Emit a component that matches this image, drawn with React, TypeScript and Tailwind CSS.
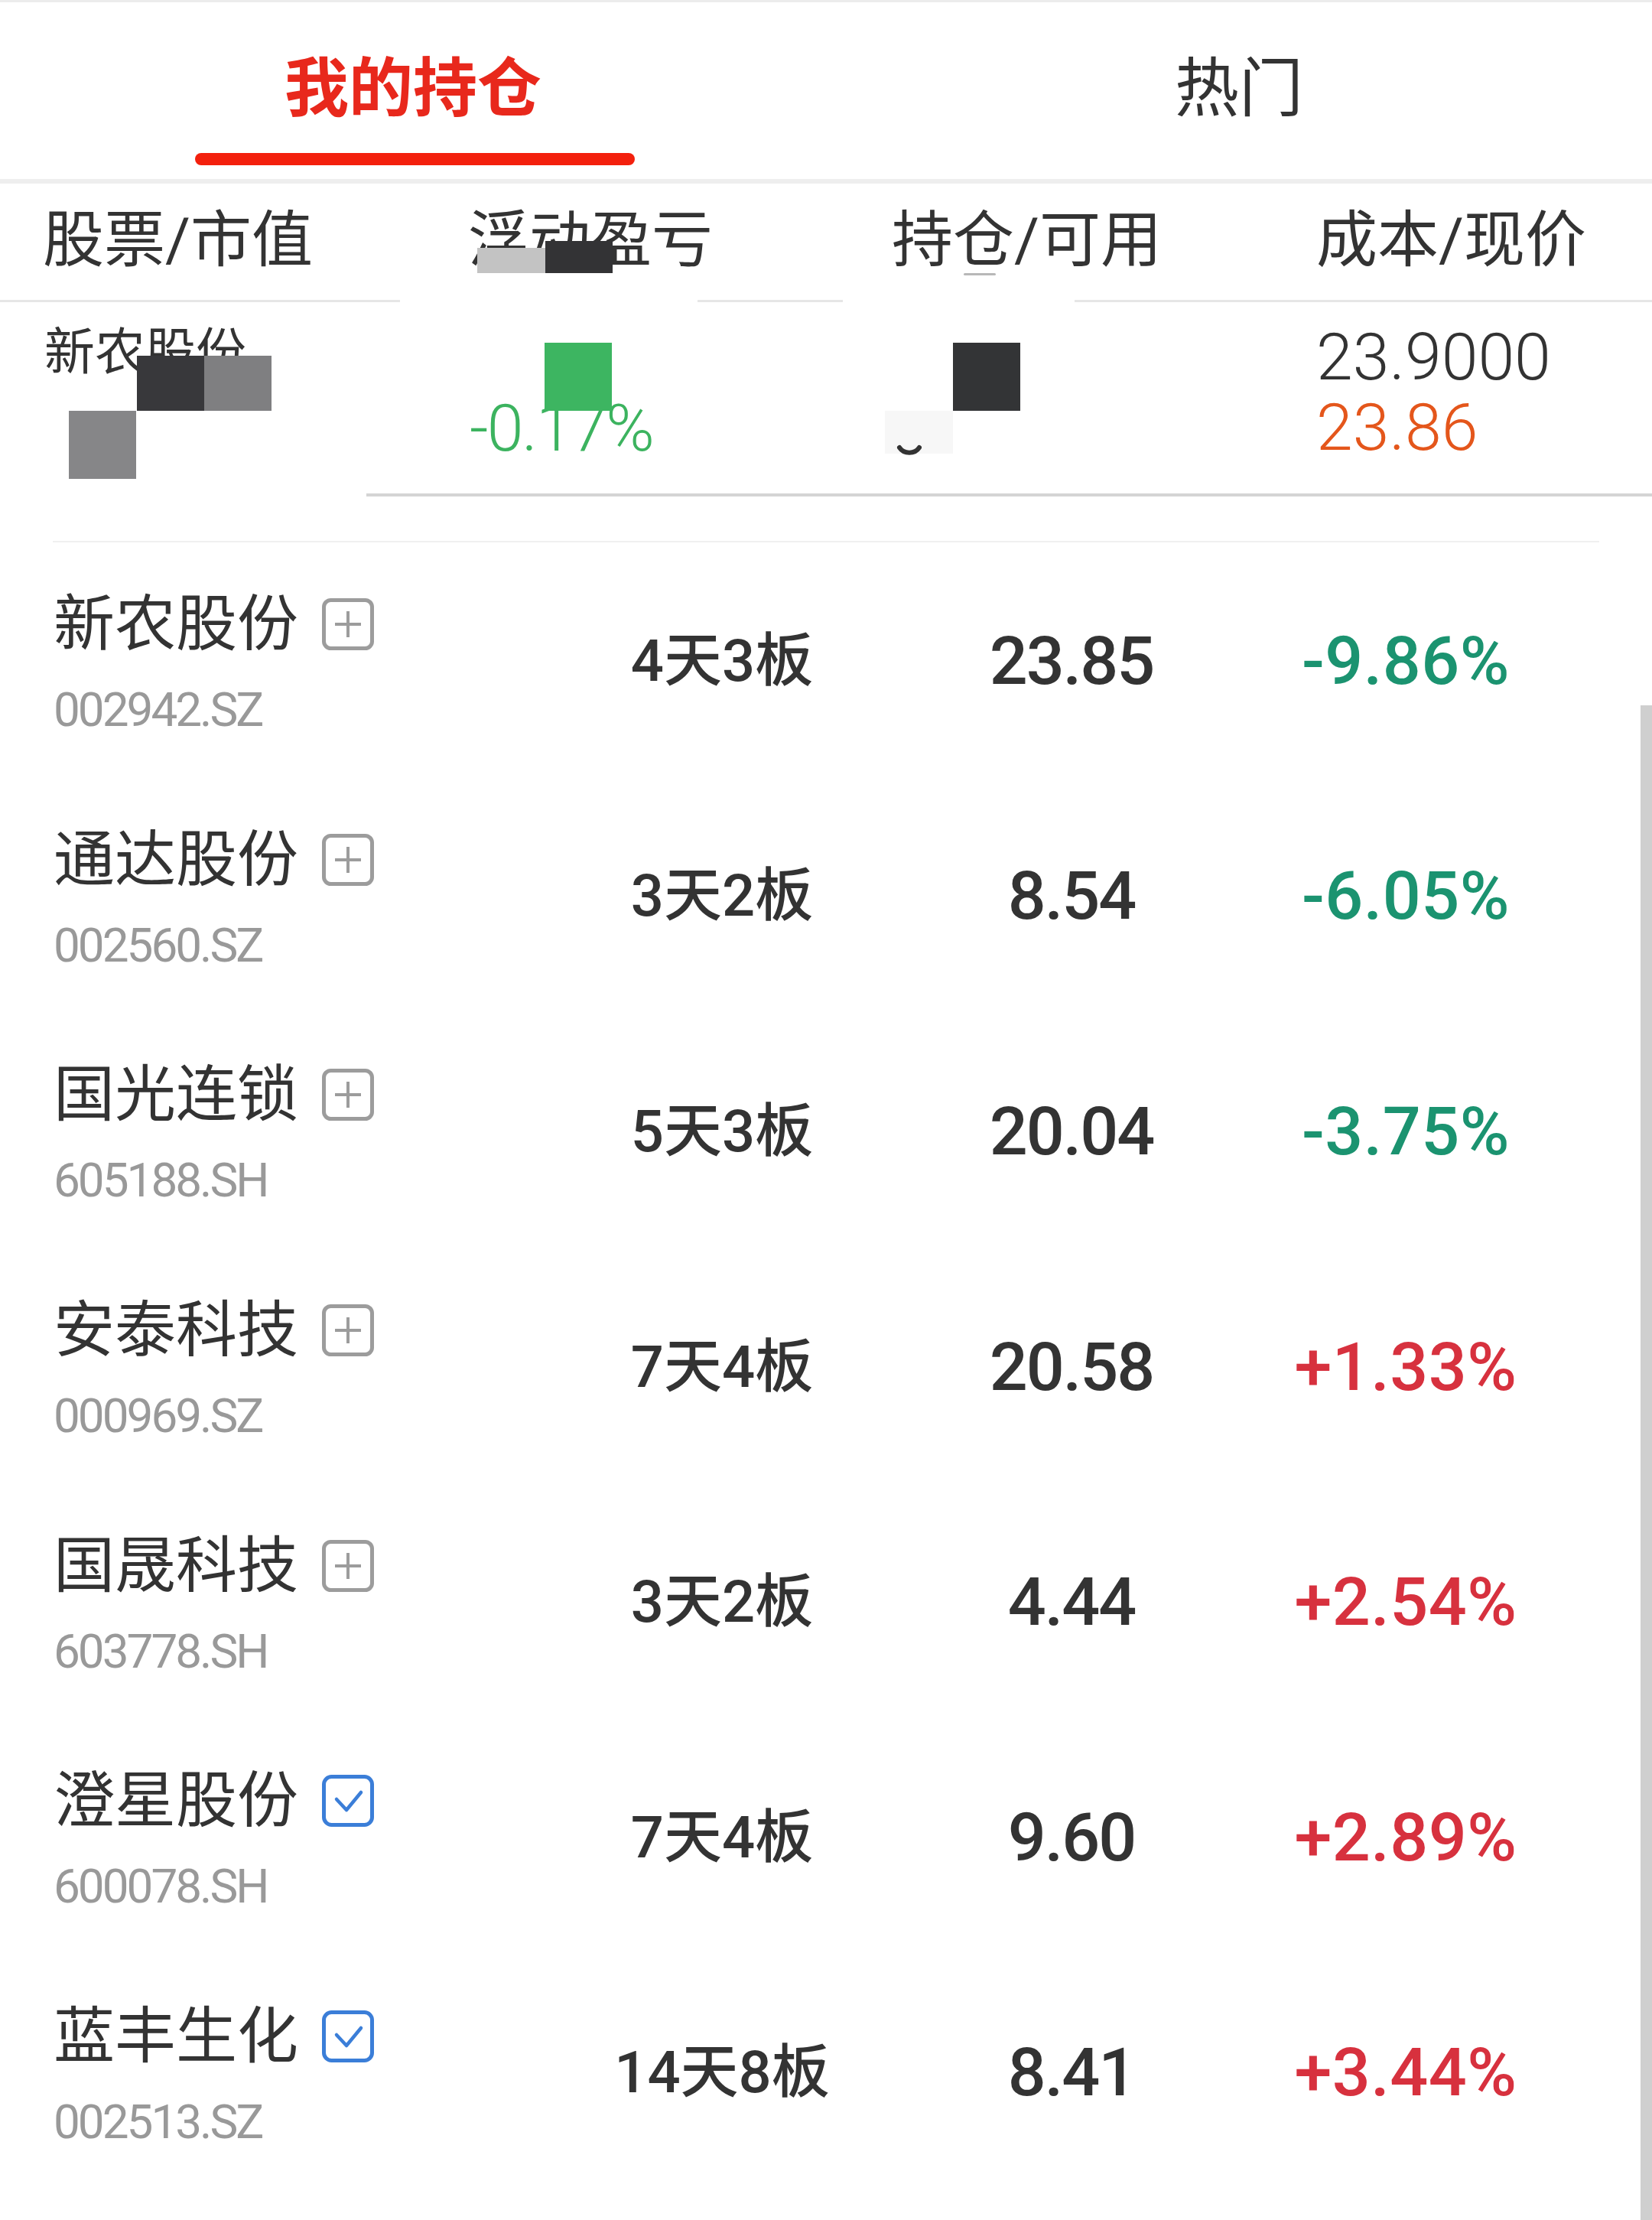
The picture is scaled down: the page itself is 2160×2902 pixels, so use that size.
import React from 'react';

type Row = {
    name: string;
    code: string;
    streak: string;
    price: string;
    change: string;
    added: boolean;
};

const rows: Row[] = [
    { name: '新农股份', code: '002942.SZ', streak: '4天3板', price: '23.85', change: '-9.86%', added: false },
    { name: '通达股份', code: '002560.SZ', streak: '3天2板', price: '8.54', change: '-6.05%', added: false },
    { name: '国光连锁', code: '605188.SH', streak: '5天3板', price: '20.04', change: '-3.75%', added: false },
    { name: '安泰科技', code: '000969.SZ', streak: '7天4板', price: '20.58', change: '+1.33%', added: false },
    { name: '国晟科技', code: '603778.SH', streak: '3天2板', price: '4.44', change: '+2.54%', added: false },
    { name: '澄星股份', code: '600078.SH', streak: '7天4板', price: '9.60', change: '+2.89%', added: true },
    { name: '蓝丰生化', code: '002513.SZ', streak: '14天8板', price: '8.41', change: '+3.44%', added: true },
];

function AddIcon() {
    return (
        <svg width="68" height="68" viewBox="0 0 68 68" fill="none">
            <rect x="2.5" y="2.5" width="63" height="63" rx="9" stroke="#9c9c9c" strokeWidth="5" />
            <path d="M17 34H51M34 17V51" stroke="#9c9c9c" strokeWidth="4" />
        </svg>
    );
}

function CheckedIcon() {
    return (
        <svg width="68" height="68" viewBox="0 0 68 68" fill="none">
            <rect x="2.5" y="2.5" width="63" height="63" rx="10" stroke="#3b7ed8" strokeWidth="5" />
            <path d="M19 32L32 46L51 23" stroke="#3b7ed8" strokeWidth="4.5" strokeLinecap="round" strokeLinejoin="round" />
        </svg>
    );
}

function StockRow({ row }: { row: Row }) {
    const up = row.change.startsWith('+');
    return (
        <div className="flex h-[307.6px] items-center">
            <div className="flex w-[720px] flex-col pl-[70px] pt-[10px]">
                <div className="flex items-center">
                    <span className="text-[80px] leading-none text-[#333333]">{row.name}</span>
                    <span className="ml-[31px] flex">{row.added ? <CheckedIcon /> : <AddIcon />}</span>
                </div>
                <div className="mt-[41px] text-[62px] leading-none tracking-[-3px] text-[#999999]">{row.code}</div>
            </div>
            <div className="w-[448px] pt-[2px] text-center text-[76px] font-medium leading-none text-[#333333]">{row.streak}</div>
            <div className="w-[466px] pt-[2px] text-center text-[88px] font-medium leading-none tracking-[-2px] text-[#333333]">{row.price}</div>
            <div className={`w-[408px] pt-[2px] text-center text-[88px] font-medium leading-none tracking-[0.5px] ${up ? 'text-[#d7313e]' : 'text-[#1b9370]'}`}>
                {row.change}
            </div>
        </div>
    );
}

export default function App() {
    return (
        <div className="relative h-[2902px] w-[2160px] overflow-hidden bg-white font-['Roboto','Noto_Sans_CJK_SC',sans-serif]">
            <div className="h-[3px] bg-[#ececec]" />

            {/* tabs */}
            <div className="flex h-[231px]">
                <div className="flex w-1/2 flex-col items-center">
                    <div className="mt-[72px] text-[84px] font-bold leading-none text-[#e8281c]">我的持仓</div>
                    <div className="mt-[41px] ml-[4px] h-[16px] w-[575px] rounded-full bg-[#f3200d]" />
                </div>
                <div className="flex w-1/2 flex-col items-center">
                    <div className="mt-[72px] text-[84px] leading-none text-[#333333]">热门</div>
                </div>
            </div>
            <div className="h-[6px] bg-[#eeeeee]" />

            {/* column header */}
            <div className="relative flex h-[152px] items-center pb-[4px] text-[80px] leading-none text-[#333333]">
                <div className="w-[612px] pl-[56px]">股票/市值</div>
                <div className="w-[554px]">浮动盈亏</div>
                <div className="w-[555px]">持仓/可用</div>
                <div className="flex-1">成本/现价</div>
                <div className="absolute left-[624px] top-[84px] h-[33px] w-[89px] bg-[#c3c3c3]" />
                <div className="absolute left-[713px] top-[75px] h-[42px] w-[88px] bg-[#333335]" />
                <div className="absolute left-[1260px] top-[117px] h-[3px] w-[42px] rounded-full bg-[#b8b8b8]" />
            </div>
            <div className="flex h-[3px]">
                <div className="w-[523px] bg-[#e6e6e6]" />
                <div className="w-[389px]" />
                <div className="w-[190px] bg-[#e6e6e6]" />
                <div className="w-[303px]" />
                <div className="flex-1 bg-[#e6e6e6]" />
            </div>

            {/* holding row */}
            <div className="relative flex h-[250px]">
                <div className="w-[612px] pl-[58px] pt-[33px] text-[66px] leading-none text-[#333333]">新农股份</div>
                <div className="w-[554px] pl-[2px] pt-[122px] text-[86px] font-light leading-none tracking-[-2px] text-[#3cb35f]">-0.17%</div>
                <div className="w-[555px]" />
                <div className="flex flex-1 flex-col pt-[29px] text-[86px] font-light leading-none">
                    <span className="text-[#333333]">23.9000</span>
                    <span className="mt-[6px] text-[#e4561b]">23.86</span>
                </div>
                <div className="absolute left-[179px] top-[70px] h-[72px] w-[88px] bg-[#38383b]" />
                <div className="absolute left-[267px] top-[70px] h-[72px] w-[88px] bg-[#7f7f81]" />
                <div className="absolute left-[90px] top-[142px] h-[89px] w-[88px] bg-[#868688]" />
                <div className="absolute left-[712px] top-[53px] h-[89px] w-[88px] bg-[#3db561]" />
                <div className="absolute left-[1157px] top-[142px] h-[56px] w-[89px] bg-[#f7f7f7]" />
                <div className="absolute left-[1246px] top-[53px] h-[89px] w-[88px] bg-[#333436]" />
                <svg className="absolute left-[1172px] top-[186px]" width="34" height="16" viewBox="0 0 34 16" fill="none">
                    <path d="M4 4C10 13 24 13 30 4" stroke="#333333" strokeWidth="6" strokeLinecap="round" />
                </svg>
            </div>
            <div className="ml-[479px] h-[4px] bg-[#d4d4d4]" />
            <div className="h-[58px]" />
            <div className="mx-[69px] h-[2px] bg-[#f0f0f0]" />

            {/* list */}
            <div className="flex flex-col">
                {rows.map((row) => (
                    <StockRow key={row.code} row={row} />
                ))}
            </div>

            <div className="absolute bottom-0 right-0 top-[922px] w-[15px] bg-[#cfcfcf]" />
        </div>
    );
}
